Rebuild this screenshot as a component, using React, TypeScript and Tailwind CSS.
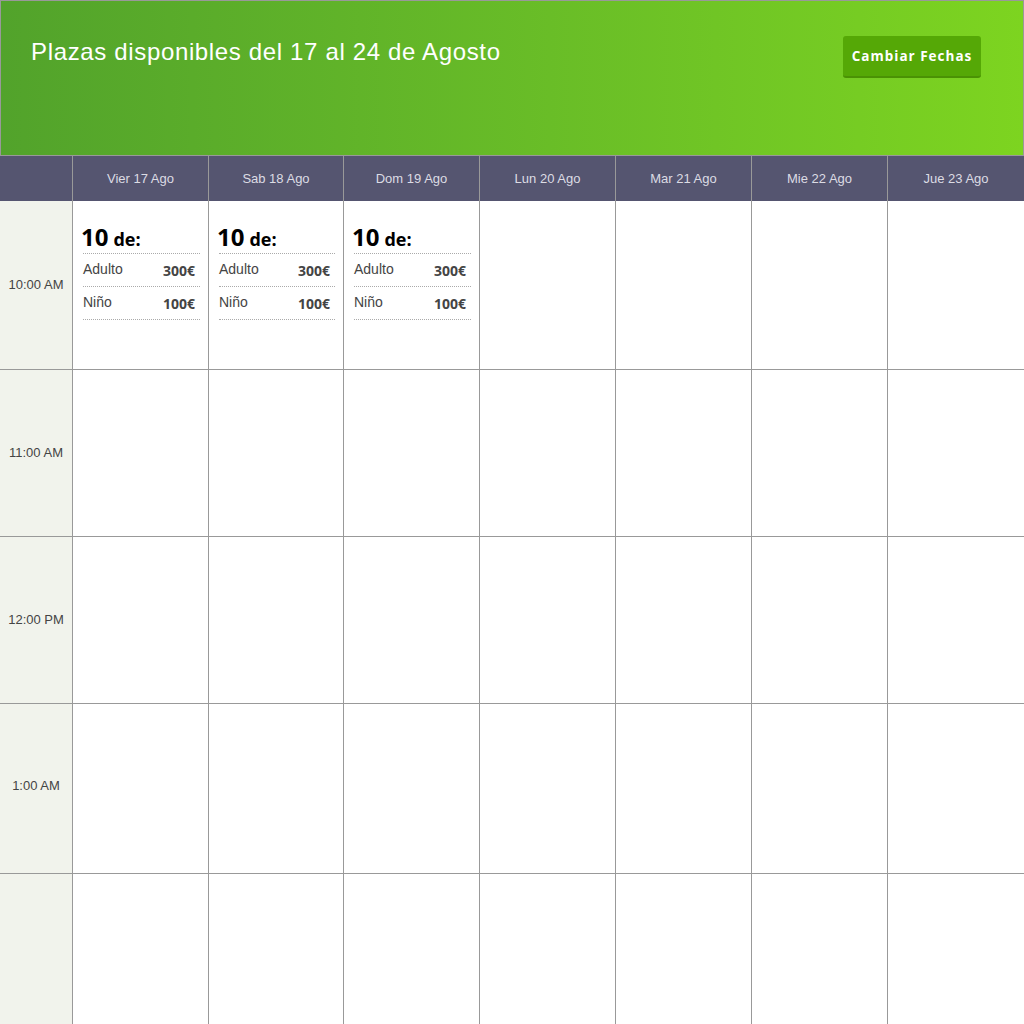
import React from "react";

const days = ["Vier 17 Ago", "Sab 18 Ago", "Dom 19 Ago", "Lun 20 Ago", "Mar 21 Ago", "Mie 22 Ago", "Jue 23 Ago"];

const rows = [
  { label: "10:00 AM", h: "h-[168px]", pb: "", cards: true },
  { label: "11:00 AM", h: "h-[167px]", pb: "", cards: false },
  { label: "12:00 PM", h: "h-[167px]", pb: "", cards: false },
  { label: "1:00 AM", h: "h-[170px]", pb: "pb-[6px]", cards: false },
  { label: "", h: "h-[151px]", pb: "", cards: false },
];

const cols = "grid grid-cols-[72px_136px_135px_136px_136px_136px_136px_1fr]";

function Card() {
  return (
    <div className="pl-[10px] pr-[8px] pt-[23px]">
      <div className="flex items-baseline gap-[5px] border-b border-dotted border-[#aaa] pb-[1px] font-['Open_Sans',sans-serif] font-bold text-black">
        <span className="-ml-[2px] text-[24px] leading-[26px]">10</span>
        <span className="text-[18px] leading-[26px]">de:</span>
      </div>
      {[
        ["Adulto", "300€"],
        ["Niño", "100€"],
      ].map(([k, v]) => (
        <div key={k} className="flex h-[33px] items-center justify-between border-b border-dotted border-[#aaa] pr-[5px]">
          <span className="font-['Liberation_Sans',Arial,sans-serif] text-[14px] text-[#444] -mt-[2px]">{k}</span>
          <span className="font-['Open_Sans',sans-serif] text-[14px] font-bold text-[#444]">{v}</span>
        </div>
      ))}
    </div>
  );
}

export default function App() {
  return (
    <div className="w-[1024px] h-[1024px] overflow-hidden bg-white font-['Liberation_Sans',Arial,sans-serif]">
      <div className="h-[156px] border border-[#999] bg-gradient-to-r from-[#52a32b] to-[#7dd420] flex justify-between items-start">
        <h1 className="ml-[30px] mt-[36px] text-[24px] leading-[30px] text-white font-normal tracking-[0.65px]">
          Plazas disponibles del 17 al 24 de Agosto
        </h1>
        <button className="mr-[42px] mt-[35px] h-[42px] w-[138px] rounded-[3px] bg-[#55a806] border-b-2 border-[#4a9204] font-['Open_Sans',sans-serif] text-[13.5px] font-bold tracking-[1px] text-white">
          Cambiar Fechas
        </button>
      </div>
      <div className={`${cols} h-[45px] bg-[#555570]`}>
        <div />
        {days.map((d) => (
          <div key={d} className="border-l border-[#999] flex items-center justify-center text-[13px] text-[#dcdce4]">
            {d}
          </div>
        ))}
      </div>
      {rows.map((r, i) => (
        <div key={i} className={`${cols} ${r.h} ${i > 0 ? "border-t border-[#999]" : ""}`}>
          <div className={`bg-[#f1f3ec] flex items-center justify-center text-[13px] text-[#444] ${r.pb}`}>{r.label}</div>
          {days.map((d, j) => (
            <div key={d} className="border-l border-[#999]">
              {r.cards && j < 3 ? <Card /> : null}
            </div>
          ))}
        </div>
      ))}
    </div>
  );
}
